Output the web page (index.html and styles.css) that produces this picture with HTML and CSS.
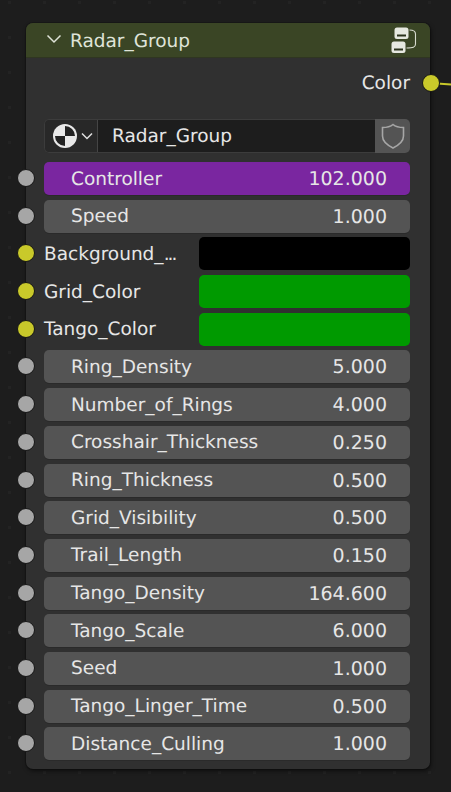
FILE: index.html
```html
<!DOCTYPE html>
<html lang="en">
<head>
  <meta charset="UTF-8">
  <title>Radar_Group</title>
  <link rel="stylesheet" href="styles.css">
</head>
<body>
  <div class="canvas">
    <svg class="link" width="14" height="4" viewBox="0 0 14 4"><path d="M0 1.5 L14 2.5" stroke="#c9c92a" stroke-width="2"/></svg>

    <div class="node">
      <div class="node-header">
        <svg class="collapse" width="16" height="10" viewBox="0 0 16 10"><path d="M1.5 1.5 L8 8 L14.5 1.5" fill="none" stroke="#dfe3d8" stroke-width="1.5"/></svg>
        <span class="node-title">Radar_Group</span>
        <svg class="group-icon" width="26" height="27" viewBox="0 0 26 27">
          <rect x="3.5" y="0.5" width="14" height="11.5" rx="2.5" fill="#e6e8e0"/>
          <rect x="0.5" y="14.5" width="14" height="11.5" rx="2.5" fill="#e6e8e0"/>
          <path d="M6 8.5 H15 M3 22.500 H12" stroke="#2b321c" stroke-width="2"/>
          <path d="M18.500 3 C22 3 24.500 4 24.500 7 V17 C24.500 20.500 22 21 15.500 21" fill="none" stroke="#d8dbd0" stroke-width="1.1"/>
        </svg>
      </div>

      <div class="node-body">
        <div class="output-row">
          <span>Color</span>
          <span class="socket socket-color socket-out"></span>
        </div>

        <div class="datablock">
          <div class="db-picker">
            <svg width="26" height="26" viewBox="0 0 26 26">
              <circle cx="13" cy="13" r="12" fill="#e8e8e8"/>
              <path d="M13 13 V3 A10 10 0 0 1 23 13 Z M13 13 V23 A10 10 0 0 1 3 13 Z" fill="#222"/>
            </svg>
            <svg width="12" height="8" viewBox="0 0 12 8"><path d="M1 1.500 L6 6.500 L11 1.500" fill="none" stroke="#e0e0e0" stroke-width="1.5"/></svg>
          </div>
          <div class="db-name">Radar_Group</div>
          <div class="db-shield">
            <svg width="24" height="26" viewBox="0 0 24 26"><path d="M12 1.500 C15 4 18.500 4.500 22.500 4.500 V13 C22.500 19 17 22.500 12 25 C7 22.500 1.500 19 1.500 13 V4.500 C5.500 4.500 9 4 12 1.500 Z" fill="none" stroke="#a6a6a6" stroke-width="1.6"/></svg>
          </div>
        </div>

        <div class="rows">
          <div class="row field field-active"><span class="socket"></span><span>Controller</span><span class="value">102.000</span></div>
          <div class="row field"><span class="socket"></span><span>Speed</span><span class="value">1.000</span></div>
          <div class="row color-row"><span class="socket socket-color"></span><span class="color-label">Background_<span class="dots">...</span></span><div class="swatch swatch-black"></div></div>
          <div class="row color-row"><span class="socket socket-color"></span><span class="color-label">Grid_Color</span><div class="swatch swatch-green"></div></div>
          <div class="row color-row"><span class="socket socket-color"></span><span class="color-label">Tango_Color</span><div class="swatch swatch-green"></div></div>
          <div class="row field"><span class="socket"></span><span>Ring_Density</span><span class="value">5.000</span></div>
          <div class="row field"><span class="socket"></span><span>Number_of_Rings</span><span class="value">4.000</span></div>
          <div class="row field"><span class="socket"></span><span>Crosshair_Thickness</span><span class="value">0.250</span></div>
          <div class="row field"><span class="socket"></span><span>Ring_Thickness</span><span class="value">0.500</span></div>
          <div class="row field"><span class="socket"></span><span>Grid_Visibility</span><span class="value">0.500</span></div>
          <div class="row field"><span class="socket"></span><span>Trail_Length</span><span class="value">0.150</span></div>
          <div class="row field"><span class="socket"></span><span>Tango_Density</span><span class="value">164.600</span></div>
          <div class="row field"><span class="socket"></span><span>Tango_Scale</span><span class="value">6.000</span></div>
          <div class="row field"><span class="socket"></span><span>Seed</span><span class="value">1.000</span></div>
          <div class="row field"><span class="socket"></span><span>Tango_Linger_Time</span><span class="value">0.500</span></div>
          <div class="row field"><span class="socket"></span><span>Distance_Culling</span><span class="value">1.000</span></div>
        </div>
      </div>
    </div>
  </div>
</body>
</html>
```

FILE: styles.css
```css
body {
  margin: 0;
  background: #1d1d1d;
  font-family: "DejaVu Sans", sans-serif;
  font-size: 18.5px;
  text-rendering: geometricPrecision;
  color: #e6e6e6;
  overflow: hidden;
}

.canvas {
  position: relative;
  width: 451px;
  height: 792px;
  background-image: radial-gradient(circle, #232323 1.5px, transparent 2px);
  background-size: 35px 35px;
  background-position: -8px -15px;
}

.link {
  position: absolute;
  left: 437px;
  top: 82px;
}

/* the node sits on the free canvas */
.node {
  position: absolute;
  left: 26px;
  top: 23px;
  width: 404px;
  height: 746px;
  display: flex;
  flex-direction: column;
  background: #303030;
  border-radius: 7px;
  box-shadow: 1px 2px 4px rgba(0, 0, 0, 0.55), 0 0 0 1px #181818;
}

.node-header {
  height: 34px;
  flex: none;
  display: flex;
  align-items: center;
  padding: 0 13px 0 20px;
  background: #3a4525;
  border-bottom: 1px solid #2f3621;
  border-radius: 7px 7px 0 0;
  color: #dfe3d8;
}

.node-title {
  margin-left: 8px;
  padding-top: 2px;
  flex: 1;
}

.collapse {
  margin-top: -3px;
}

.node-body {
  flex: 1;
  display: flex;
  flex-direction: column;
  padding: 0 20px 0 18px;
}

.output-row {
  height: 50px;
  flex: none;
  display: flex;
  align-items: center;
  justify-content: flex-end;
  position: relative;
}

.datablock {
  height: 34px;
  flex: none;
  margin-top: 11px;
  display: flex;
  border-radius: 5px;
  overflow: hidden;
}

.db-picker {
  width: 54px;
  display: flex;
  align-items: center;
  gap: 3px;
  padding-left: 7px;
  box-sizing: border-box;
  background: #282828;
  border: 1px solid #3c3c3c;
  border-right-color: #454545;
  border-radius: 5px 0 0 5px;
}

.db-name {
  flex: 1;
  display: flex;
  align-items: center;
  padding-left: 14px;
  background: #1d1d1d;
  border-top: 1px solid #3c3c3c;
  border-bottom: 1px solid #3c3c3c;
}

.db-shield {
  width: 35px;
  display: flex;
  align-items: center;
  justify-content: center;
  background: #545454;
}

.rows {
  margin-top: 9px;
  display: flex;
  flex-direction: column;
  gap: 4.7px;
}

.row {
  height: 33px;
  display: flex;
  align-items: center;
  position: relative;
}

.field {
  justify-content: space-between;
  padding: 1px 23px 0 27px;
  box-sizing: border-box;
  background: #545454;
  border-radius: 5px;
  box-shadow: 0 1px 0 #2a2a2a;
}

.field-active {
  background: #7a26a0;
}

.value {
  font-size: 19px;
}

.color-label {
  width: 155px;
  padding-top: 1px;
  flex: none;
  white-space: nowrap;
}

.dots {
  letter-spacing: -2px;
}

.swatch {
  flex: 1;
  height: 33px;
  border-radius: 5px;
}

.swatch-black {
  background: #000;
}

.swatch-green {
  background: #009a00;
}

.socket {
  position: absolute;
  left: -27px;
  top: 7px;
  width: 16px;
  height: 16px;
  border-radius: 50%;
  border: 1px solid #161616;
  background: #a6a6a6;
}

.socket-color {
  background: #c9c92a;
}

.socket-out {
  left: auto;
  right: -30px;
  top: 15.5px;
}
```
